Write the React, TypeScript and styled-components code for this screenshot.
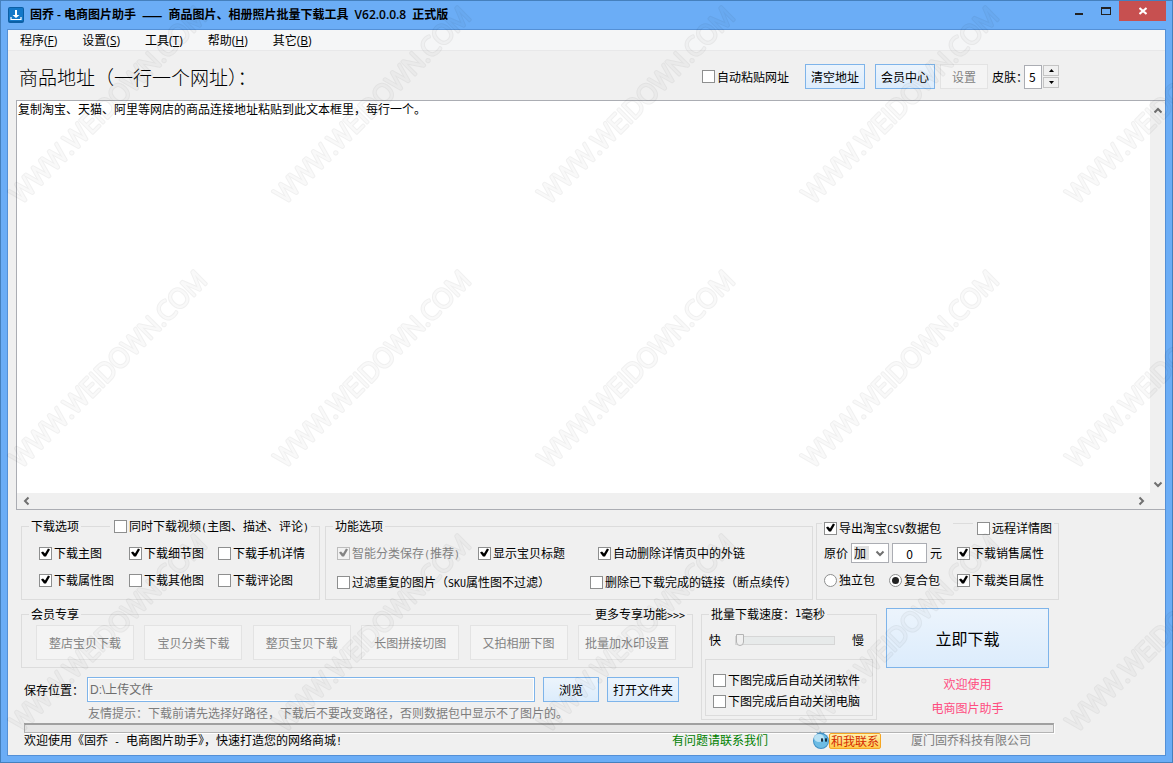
import React, { useState } from "react";
import styled, { createGlobalStyle, css } from "styled-components";

const songFont = `"Noto Sans CJK SC", sans-serif`;
const uiFont = `"Open Sans", "Noto Sans CJK SC", sans-serif`;

const GlobalStyle = createGlobalStyle`
  *, *::before, *::after { box-sizing: border-box; }
  body {
    margin: 0;
    background: #6badf6;
    color: #000;
    font-family: ${songFont};
    font-size: 12px;
    line-height: 16px;
  }
  button, input, select, textarea { font: inherit; color: inherit; margin: 0; }
`;

/* ---------- window frame ---------- */

const Window = styled.div`
  position: relative;
  display: flex;
  flex-direction: column;
  min-height: 100vh;
  min-width: 1080px;
  padding: 0 6px 6px;
  background: #6badf6;
  border: 1px solid #4580bd;
`;

const TitleBar = styled.header`
  display: flex;
  align-items: flex-start;
  height: 28px;
`;

const AppTitle = styled.h1`
  display: flex;
  align-items: center;
  gap: 6px;
  flex: 1;
  margin: 0;
  padding: 6px 0 0 1px;
  font-family: ${uiFont};
  font-size: 12px;
  font-weight: 600;
  line-height: 16px;
  white-space: pre;
`;

const Dash = styled.span`
  font-family: ${songFont};
`;

const WindowControls = styled.div`
  display: flex;
`;

const ControlButton = styled.button<{ $close?: boolean }>`
  display: grid;
  place-items: center;
  width: ${(p) => (p.$close ? 47 : 27)}px;
  height: 20px;
  padding: 0;
  border: 0;
  background: ${(p) => (p.$close ? "#c75050" : "transparent")};
`;

const Client = styled.main`
  display: flex;
  flex: 1;
  flex-direction: column;
  background: #f0f0f0;
  border: 1px solid #5490d6;
`;

const MenuBar = styled.nav`
  display: flex;
  gap: 25px;
  height: 21px;
  padding: 3px 12px 1px;
  background: #f5f6f7;
  border-bottom: 1px solid #e8e8e9;
  font-family: ${uiFont};
`;

const MenuItem = styled.button`
  padding: 0;
  border: 0;
  background: none;
  line-height: 16px;
`;

/* ---------- shared controls ---------- */

const Half = styled.span`
  font-family: "DejaVu Sans Mono", monospace;
  font-size: 10px;
  line-height: 1;
  white-space: pre;
`;

const ActionButton = styled.button<{ $w: number; $h?: number; $large?: boolean }>`
  flex: none;
  width: ${(p) => p.$w}px;
  height: ${(p) => p.$h ?? 25}px;
  padding: 0;
  border: 1px solid #7eb4ea;
  background: linear-gradient(#ecf4fc, #dcecfc);
  font-size: ${(p) => (p.$large ? 16 : 12)}px;
  white-space: nowrap;
  &:disabled {
    border-color: #e3e3e3;
    background: #f4f4f4;
    color: #838383;
  }
`;

const CheckLabel = styled.label<{ $off?: boolean }>`
  display: flex;
  align-items: center;
  gap: 2px;
  height: 16px;
  white-space: nowrap;
  color: ${(p) => (p.$off ? "#838383" : "inherit")};
`;

const box = css`
  appearance: none;
  flex: none;
  display: block;
  width: 13px;
  height: 13px;
  border: 1px solid #8e8f8f;
  background: #fff;
`;

const CheckInput = styled.input`
  ${box}
  &:checked::after {
    content: "";
    display: block;
    width: 11px;
    height: 11px;
    background: #000;
    clip-path: polygon(1px 5px, 3px 4px, 5px 6px, 8px 1px, 10px 2px, 6px 9px, 4px 9px);
  }
  &:disabled {
    border-color: #bcbcbc;
    background: #f2f2f2;
  }
  &:disabled::after {
    background: #838383;
  }
`;

const RadioInput = styled.input`
  ${box}
  border-radius: 50%;
  &:checked::after {
    content: "";
    display: block;
    width: 7px;
    height: 7px;
    margin: 2px;
    border-radius: 50%;
    background: #222;
  }
`;

type CheckProps = { children: React.ReactNode; on?: boolean; off?: boolean };

function Check({ children, on, off }: CheckProps) {
  return (
    <CheckLabel $off={off}>
      <CheckInput type="checkbox" defaultChecked={on} disabled={off} />
      <span>{children}</span>
    </CheckLabel>
  );
}

function Radio({ children, on }: CheckProps) {
  return (
    <CheckLabel>
      <RadioInput type="radio" name="package" defaultChecked={on} />
      <span>{children}</span>
    </CheckLabel>
  );
}

/* ---------- address toolbar ---------- */

const Toolbar = styled.div`
  display: flex;
  align-items: center;
  max-width: 1051px;
  height: 49px;
  padding: 2px 0 0 11px;
`;

const Heading = styled.h2`
  flex: 1;
  margin: 0;
  font-size: 19px;
  font-weight: 300;
  line-height: 24px;
  white-space: nowrap;
`;

const ToolGroup = styled.div<{ $gap: number; $before: number }>`
  display: flex;
  align-items: center;
  gap: ${(p) => p.$gap}px;
  margin-left: ${(p) => p.$before}px;
`;

const SkinLabel = styled.label`
  width: 32px;
  white-space: nowrap;
`;

const SmallField = styled.input<{ $w: number; $h: number; $centre?: boolean }>`
  width: ${(p) => p.$w}px;
  height: ${(p) => p.$h}px;
  padding: 0 4px;
  border: 1px solid #abadb3;
  background: #fff;
  text-align: ${(p) => (p.$centre ? "center" : "left")};
`;

const Spinner = styled.div`
  display: grid;
  gap: 1px;
  margin-left: 1px;
`;

const SpinButton = styled.button`
  display: grid;
  place-items: center;
  width: 16px;
  height: 11px;
  padding: 0;
  border: 1px solid #c4c4c4;
  background: #f0f0f0;
`;

/* ---------- address editor ---------- */

const Editor = styled.section`
  display: grid;
  flex: 1;
  grid-template: 1fr 16px / 1fr 15px;
  margin-left: 8px;
  border: 1px solid #abadb3;
  border-right: 0;
  background: #fff;
`;

const AddressText = styled.textarea`
  width: 100%;
  min-height: 240px;
  padding: 0 1px;
  border: 0;
  outline: 0;
  resize: none;
  overflow: hidden;
  background: #fff;
  line-height: 16px;
`;

const ScrollTrack = styled.div<{ $across?: boolean }>`
  display: flex;
  flex-direction: ${(p) => (p.$across ? "row" : "column")};
  justify-content: space-between;
  padding: ${(p) => (p.$across ? "0 2px" : "2px 0")};
  background: #f0f0f0;
`;

const ScrollButton = styled.button`
  display: grid;
  place-items: center;
  width: 15px;
  height: 15px;
  padding: 0;
  border: 0;
  background: none;
`;

const Corner = styled.div`
  background: #f0f0f0;
`;

type Direction = "up" | "down" | "left" | "right";
const chevrons: Record<Direction, string> = {
  up: "M1.5 6.5 5 3 8.5 6.5",
  down: "M1.5 3.5 5 7 8.5 3.5",
  left: "M6.5 1.5 3 5 6.5 8.5",
  right: "M3.5 1.5 7 5 3.5 8.5",
};

function Chevron({ to }: { to: Direction }) {
  return (
    <svg width="10" height="10" viewBox="0 0 10 10" aria-hidden="true">
      <path d={chevrons[to]} fill="none" stroke="#707070" strokeWidth="2" />
    </svg>
  );
}

/* ---------- option groups ---------- */

const Options = styled.section`
  max-width: 1051px;
  padding: 0 0 8px 13px;
`;

const Columns = styled.div`
  display: flex;
  align-items: flex-start;
`;

const Group = styled.fieldset<{ $w: number; $before?: number; $drop?: number; $pad: string }>`
  flex: none;
  min-width: 0;
  width: ${(p) => p.$w}px;
  margin: ${(p) => p.$drop ?? 0}px 0 0 ${(p) => p.$before ?? 0}px;
  padding: ${(p) => p.$pad};
  border: 1px solid #dcdcdc;
`;

const Legend = styled.legend<{ $w?: number; $before?: number; $low?: boolean }>`
  display: flex;
  align-items: center;
  width: ${(p) => (p.$w ? `${p.$w}px` : "auto")};
  height: ${(p) => (p.$low ? 26 : 16)}px;
  margin-left: ${(p) => p.$before ?? 0}px;
  padding: ${(p) => (p.$low ? 10 : 0)}px 2px 0;
  white-space: nowrap;
`;

const Rule = styled.span<{ $low?: boolean }>`
  flex: 1;
  height: 1px;
  margin: 0 4px 0 2px;
  background: #dcdcdc;
  ${(p) => p.$low && css`
    align-self: flex-start;
    margin: 3px 4px 0 12px;
  `}
`;

const OptionGrid = styled.div<{ $cols: string; $gap: number }>`
  display: grid;
  grid-template-columns: ${(p) => p.$cols};
  row-gap: ${(p) => p.$gap}px;
  align-items: center;
  & + & {
    margin-top: 13px;
  }
`;

const PriceRow = styled.div`
  display: flex;
  align-items: center;
  gap: 3px;
`;

const SelectBox = styled.span`
  position: relative;
  display: block;
  svg {
    position: absolute;
    top: 5px;
    right: 4px;
    pointer-events: none;
  }
`;

const Select = styled.select`
  appearance: none;
  display: block;
  width: 38px;
  height: 20px;
  padding: 0 2px;
  border: 1px solid #abadb3;
  border-radius: 0;
  background: linear-gradient(#e0e0e0, #e0e0e0) 2px 2px / 15px 14px no-repeat #fff;
`;

const RadioRow = styled.div`
  display: flex;
  gap: 14px;
`;

/* ---------- members, paths and speed ---------- */

const PathColumn = styled.div`
  flex: none;
  width: 680px;
`;

const MemberButtons = styled.div`
  display: flex;
  justify-content: space-between;
`;

const MoreLink = styled.a`
  color: inherit;
  text-decoration: none;
`;

const PathRow = styled.div`
  display: flex;
  align-items: center;
  gap: 8px;
  margin-top: 9px;
  padding: 0 22px 0 3px;
`;

const PathLabel = styled.label`
  flex: none;
  width: 55px;
  white-space: nowrap;
`;

const PathField = styled.div`
  display: flex;
  flex: 1;
  align-items: center;
  height: 25px;
  padding: 0 2px;
  border: 1px solid #7eb4ea;
  outline: 1px solid #fff;
  outline-offset: -2px;
  color: #6d6d6d;
`;

const PathInput = styled.input`
  width: 100%;
  padding: 0;
  border: 0;
  outline: 0;
  background: none;
  font-family: "Liberation Sans", "Noto Sans CJK SC", sans-serif;
`;

const Hint = styled.p`
  margin: 3px 0 0 67px;
  color: #7d7d7d;
`;

const SpeedRow = styled.div`
  display: flex;
  align-items: center;
  height: 16px;
  padding-left: 4px;
`;

const Speed = styled.input`
  appearance: none;
  width: 100px;
  height: 9px;
  margin: 0 17px 0 14px;
  border: 1px solid #d6d6d6;
  background: #e7eaea;
  &::-webkit-slider-thumb {
    appearance: none;
    width: 8px;
    height: 12px;
    border: 1px solid #b4b4b4;
    border-radius: 0 0 4px 4px;
    background: #f0f0f0;
  }
`;

const AfterBox = styled.div`
  display: grid;
  gap: 5px;
  margin-top: 11px;
  padding: 12px 7px 6px;
  border: 1px solid #dcdcdc;
`;

const StartColumn = styled.div`
  margin: 8px 0 0 9px;
`;

const Welcome = styled.p`
  margin: 4px 0 0;
  color: #ff4c80;
  line-height: 24px;
  text-align: center;
`;

/* ---------- progress and status ---------- */

const Progress = styled.div`
  height: 10px;
  margin: 2px 5px 0 3px;
  border: 1px solid #b0b0b0;
  border-top: 2px solid #a0a0a0;
  border-bottom-color: #b4b4b4;
  box-shadow: 1px 1px 0 #fff;
  background: #e6e6e6;
`;

const StatusBar = styled.footer`
  display: grid;
  grid-template: 14px / 648px 140px 99px auto;
  align-items: center;
  padding-left: 3px;
  white-space: nowrap;
`;

const HelpLink = styled.a`
  color: #008000;
  text-decoration: none;
`;

const ContactLink = styled.a`
  display: flex;
  align-items: center;
  color: #d42a00;
  text-decoration: none;
  svg {
    position: relative;
    flex: none;
  }
`;

const ContactText = styled.span`
  height: 16px;
  margin: 2px 0 0 -3px;
  padding: 0 1px;
  border: 1px solid #f5a623;
  border-radius: 2px;
  background: linear-gradient(#fff3b0, #ffc94a);
  line-height: 14px;
`;

const Company = styled.span`
  color: #7d7d7d;
`;

const Watermark = styled.svg`
  position: absolute;
  inset: -1px;
  width: calc(100% + 2px);
  height: calc(100% + 2px);
  pointer-events: none;
  font-family: "Open Sans", sans-serif;
  font-size: 26px;
  font-weight: 300;
`;

function WatermarkLayer() {
  const domain = "WWW.WEIDOWN.COM";
  const slant = "translate(21 205) rotate(-45)";
  return (
    <Watermark aria-hidden="true">
      <defs>
        <mask id="mark-ring" maskUnits="userSpaceOnUse" x="0" y="0" width="264" height="264">
          <g transform={slant} strokeLinejoin="round">
            <text fill="#fff" stroke="#fff" strokeWidth="3">{domain}</text>
            <text fill="#666" stroke="#666" strokeWidth="1">{domain}</text>
          </g>
        </mask>
        <pattern id="site-mark" width="264" height="264" patternUnits="userSpaceOnUse">
          <rect width="264" height="264" fill="#000" fillOpacity="0.06" mask="url(#mark-ring)" />
        </pattern>
      </defs>
      <rect width="100%" height="100%" fill="url(#site-mark)" />
    </Watermark>
  );
}

const menus = [
  ["程序", "F"],
  ["设置", "S"],
  ["工具", "T"],
  ["帮助", "H"],
  ["其它", "B"],
];

const memberTools = ["整店宝贝下载", "宝贝分类下载", "整页宝贝下载", "长图拼接切图", "又拍相册下图", "批量加水印设置"];

export default function App() {
  const [skin, setSkin] = useState(5);

  return (
    <>
      <GlobalStyle />
      <Window>
        <TitleBar>
          <AppTitle>
            <svg width="16" height="16" viewBox="0 0 16 16" aria-hidden="true">
              <rect width="16" height="16" rx="2" fill="#0b5fa5" />
              <rect x="1" y="1" width="14" height="13" rx="1" fill="#1478c8" />
              <path d="M7 3h2v5h2.500L8 11 4.500 8H7z" fill="#fff" />
              <path d="M3 10v2.500h10V10" fill="none" stroke="#fff" strokeWidth="1.200" />
            </svg>
            <span>固乔 - 电商图片助手</span>
            <Dash>——</Dash>
            <span>商品图片、相册照片批量下载工具</span>
            <span>V62.0.0.8</span>
            <span>正式版</span>
          </AppTitle>
          <WindowControls>
            <ControlButton aria-label="最小化">
              <svg width="10" height="10" viewBox="0 0 10 10"><path d="M1 7h8v2H1z" fill="#222" /></svg>
            </ControlButton>
            <ControlButton aria-label="最大化">
              <svg width="10" height="8" viewBox="0 0 10 8"><path d="M0 0h10v8H0zM1 2v5h8V2z" fill="#222" fillRule="evenodd" /></svg>
            </ControlButton>
            <ControlButton $close aria-label="关闭">
              <svg width="8" height="8" viewBox="0 0 8 8"><path d="m.5 1 7 6m0-6-7 6" stroke="#fff" strokeWidth="2" /></svg>
            </ControlButton>
          </WindowControls>
        </TitleBar>

        <Client>
          <MenuBar>
            {menus.map(([name, key]) => (
              <MenuItem key={key}>{name}(<u>{key}</u>)</MenuItem>
            ))}
          </MenuBar>

          <Toolbar>
            <Heading>商品地址（一行一个网址）：</Heading>
            <Check>自动粘贴网址</Check>
            <ToolGroup $gap={10} $before={16}>
              <ActionButton $w={60}>清空地址</ActionButton>
              <ActionButton $w={60}>会员中心</ActionButton>
            </ToolGroup>
            <ToolGroup $gap={4} $before={5}>
              <ActionButton $w={48} disabled>设置</ActionButton>
              <SkinLabel htmlFor="skin">皮肤：</SkinLabel>
            </ToolGroup>
            <SmallField
              id="skin"
              $w={18}
              $h={24}
              value={skin}
              onChange={(e) => setSkin(Number(e.target.value) || 0)}
            />
            <Spinner>
              <SpinButton aria-label="增加" onClick={() => setSkin(skin + 1)}>
                <svg width="5" height="3" viewBox="0 0 5 3"><path d="M0 3 2.500 0 5 3z" /></svg>
              </SpinButton>
              <SpinButton aria-label="减少" onClick={() => setSkin(skin - 1)}>
                <svg width="5" height="3" viewBox="0 0 5 3"><path d="M0 0h5L2.500 3z" /></svg>
              </SpinButton>
            </Spinner>
          </Toolbar>

          <Editor>
            <AddressText
              aria-label="商品地址"
              defaultValue="复制淘宝、天猫、阿里等网店的商品连接地址粘贴到此文本框里，每行一个。"
            />
            <ScrollTrack>
              <ScrollButton aria-label="向上"><Chevron to="up" /></ScrollButton>
              <ScrollButton aria-label="向下"><Chevron to="down" /></ScrollButton>
            </ScrollTrack>
            <ScrollTrack $across>
              <ScrollButton aria-label="向左"><Chevron to="left" /></ScrollButton>
              <ScrollButton aria-label="向右"><Chevron to="right" /></ScrollButton>
            </ScrollTrack>
            <Corner />
          </Editor>

          <Options>
            <Columns>
              <Group $w={299} $drop={8} $pad="11px 0 11px 17px">
                <Legend $w={282} $before={-10}>
                  下载选项
                  <Rule />
                  <Check>同时下载视频<Half>(</Half>主图、描述、评论<Half>)</Half></Check>
                </Legend>
                <OptionGrid $cols="90px 89px 1fr" $gap={11}>
                  <Check on>下载主图</Check>
                  <Check on>下载细节图</Check>
                  <Check>下载手机详情</Check>
                  <Check on>下载属性图</Check>
                  <Check>下载其他图</Check>
                  <Check>下载评论图</Check>
                </OptionGrid>
              </Group>

              <Group $w={488} $before={5} $drop={8} $pad="11px 0 9px 11px">
                <Legend $before={-4}>功能选项</Legend>
                <OptionGrid $cols="141px 120px 1fr" $gap={0}>
                  <Check on off>智能分类保存<Half>(</Half>推荐<Half>)</Half></Check>
                  <Check on>显示宝贝标题</Check>
                  <Check on>自动删除详情页中的外链</Check>
                </OptionGrid>
                <OptionGrid $cols="253px 1fr" $gap={0}>
                  <Check>过滤重复的图片（<Half>SKU</Half>属性图不过滤）</Check>
                  <Check>删除已下载完成的链接（断点续传）</Check>
                </OptionGrid>
              </Group>

              <Group $w={243} $before={3} $pad="7px 0 11px 7px">
                <Legend $w={232} $before={-2} $low>
                  <Check on>导出淘宝<Half>CSV</Half>数据包</Check>
                  <Rule $low />
                  <Check>远程详情图</Check>
                </Legend>
                <OptionGrid $cols="133px 1fr" $gap={9}>
                  <PriceRow>
                    <span>原价</span>
                    <SelectBox>
                      <Select aria-label="价格调整方式">
                        <option>加</option>
                        <option>减</option>
                      </Select>
                      <Chevron to="down" />
                    </SelectBox>
                    <SmallField $w={35} $h={20} $centre aria-label="调整金额" defaultValue="0" />
                    <span>元</span>
                  </PriceRow>
                  <Check on>下载销售属性</Check>
                  <RadioRow>
                    <Radio>独立包</Radio>
                    <Radio on>复合包</Radio>
                  </RadioRow>
                  <Check on>下载类目属性</Check>
                </OptionGrid>
              </Group>
            </Columns>

            <Columns>
              <PathColumn>
                <Group $w={672} $drop={6} $pad="3px 16px 7px 14px">
                  <Legend $w={658} $before={-7}>
                    会员专享
                    <Rule />
                    <MoreLink href="#more">更多专享功能<Half>&gt;&gt;&gt;</Half></MoreLink>
                  </Legend>
                  <MemberButtons>
                    {memberTools.map((tool) => (
                      <ActionButton key={tool} $w={98} $h={35} disabled>{tool}</ActionButton>
                    ))}
                  </MemberButtons>
                </Group>
                <PathRow>
                  <PathLabel htmlFor="path">保存位置：</PathLabel>
                  <PathField>
                    <PathInput id="path" defaultValue="D:\上传文件" />
                  </PathField>
                  <ActionButton $w={56}>浏览</ActionButton>
                  <ActionButton $w={72}>打开文件夹</ActionButton>
                </PathRow>
                <Hint>友情提示：下载前请先选择好路径，下载后不要改变路径，否则数据包中显示不了图片的。</Hint>
              </PathColumn>

              <Group $w={176} $drop={6} $pad="10px 3px 3px">
                <Legend $before={4}>批量下载速度：<Half>1</Half>毫秒</Legend>
                <SpeedRow>
                  <span>快</span>
                  <Speed type="range" min={0} max={100} defaultValue={0} aria-label="批量下载速度" />
                  <span>慢</span>
                </SpeedRow>
                <AfterBox>
                  <Check>下图完成后自动关闭软件</Check>
                  <Check>下图完成后自动关闭电脑</Check>
                </AfterBox>
              </Group>

              <StartColumn>
                <ActionButton $w={163} $h={60} $large>立即下载</ActionButton>
                <Welcome>欢迎使用<br />电商图片助手</Welcome>
              </StartColumn>
            </Columns>

            <Progress role="progressbar" aria-label="下载进度" aria-valuenow={0} />

            <StatusBar>
              <span>欢迎使用《固乔<Half> - </Half>电商图片助手》，快速打造您的网络商城<Half>!</Half></span>
              <HelpLink href="#help">有问题请联系我们</HelpLink>
              <ContactLink href="#contact">
                <svg width="20" height="20" viewBox="0 0 20 20" aria-hidden="true">
                  <path d="M7 5C4 3 4 2 4 2l3 1 1-2 2 2 3-1-2 3z" fill="#5b93b8" />
                  <circle cx="9" cy="11" r="8" fill="#3f8fc4" />
                  <circle cx="9" cy="11" r="7" fill="#6dbce4" />
                  <ellipse cx="7" cy="8" rx="5" ry="4" fill="#b9e2f5" />
                  <ellipse cx="10" cy="10" rx="1" ry="2" fill="#123" />
                  <ellipse cx="14" cy="10" rx="1" ry="2" fill="#123" />
                </svg>
                <ContactText>和我联系</ContactText>
              </ContactLink>
              <Company>厦门固乔科技有限公司</Company>
            </StatusBar>
          </Options>
        </Client>
        <WatermarkLayer />
      </Window>
    </>
  );
}
